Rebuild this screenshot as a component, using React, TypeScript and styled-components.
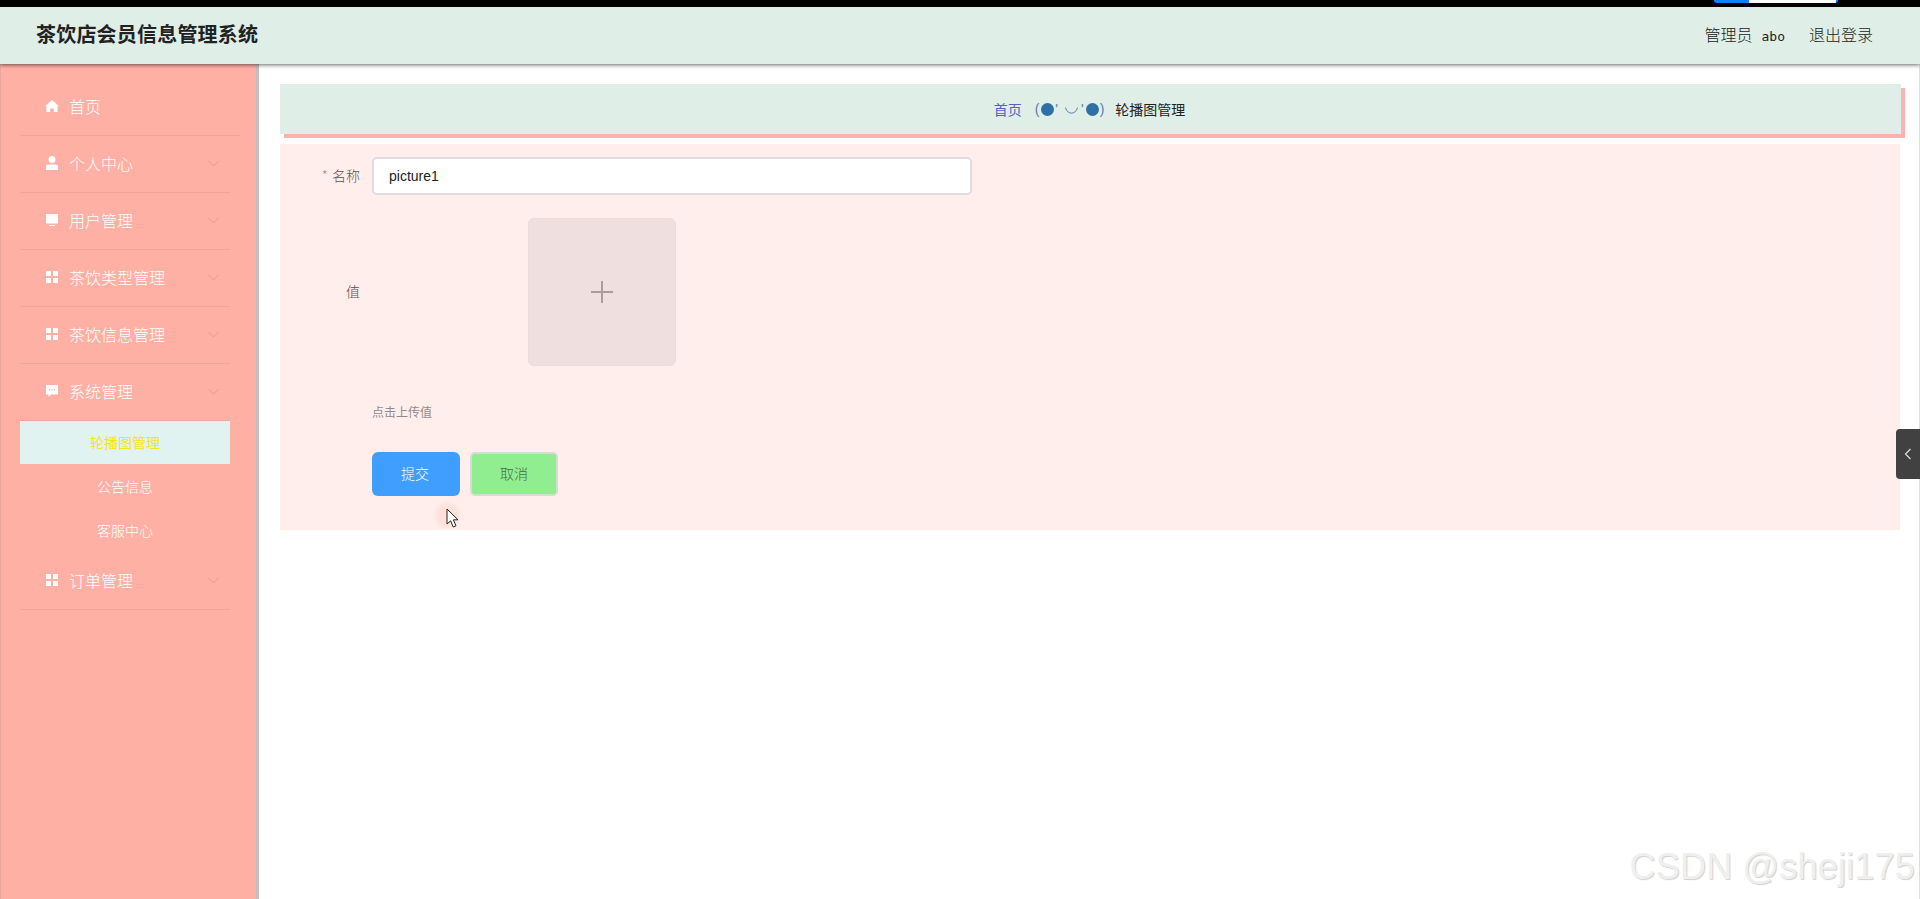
import React from 'react'
import styled, { createGlobalStyle } from 'styled-components'

const GlobalStyle = createGlobalStyle`
  html, body {
    margin: 0;
    padding: 0;
    height: 100%;
    background: #fff;
    overflow: hidden;
    font-family: "Liberation Sans", "Noto Sans CJK SC", sans-serif;
  }
  * { box-sizing: border-box; }
`

const Page = styled.div`
  position: relative;
  width: 1920px;
  height: 899px;
  display: flex;
  flex-direction: column;
  overflow: hidden;
  box-shadow: inset -1px 0 0 #dedede;
`

const TopStrip = styled.div`
  position: relative;
  height: 7px;
  flex: none;
  background: #000;
`

const BrowserPill = styled.div`
  position: absolute;
  left: 1714px;
  top: 0;
  width: 124px;
  height: 3px;
  border-radius: 0 0 6px 6px;
  background: linear-gradient(90deg, #0a84ff 0 28%, #fff 28% 98%, #0a84ff 98%);
`

const Header = styled.header`
  position: relative;
  z-index: 2;
  height: 57px;
  flex: none;
  display: flex;
  align-items: center;
  justify-content: space-between;
  padding: 0 47px 4px 36px;
  background: #dfeee7;
  box-shadow: 0 1px 4px rgba(0, 0, 0, 0.6);
`

const Title = styled.h1`
  margin: 0;
  font-family: "Noto Sans CJK SC", sans-serif;
  font-size: 20px;
  font-weight: 700;
  letter-spacing: 0.2px;
  color: #222;
`

const HeaderRight = styled.div`
  display: flex;
  align-items: center;
  gap: 24px;
  font-family: "Noto Sans CJK SC", sans-serif;
  font-size: 16px;
  font-weight: 300;
  color: #222;
`

const UserName = styled.span`
  margin-left: 9px;
  font-family: "DejaVu Sans Mono", monospace;
  font-size: 13px;
  font-weight: 400;
`

const Body = styled.div`
  flex: 1;
  display: flex;
  min-height: 0;
`

const Sidebar = styled.nav`
  width: 259px;
  flex: none;
  padding: 15px 26px 0 20px;
  background: #ffb0a5;
  border-right: 3px solid #c0c0c4;
  box-shadow: inset 1px 0 0 #e8a79c;
  font-family: "Noto Sans CJK SC", sans-serif;
  font-weight: 300;
`

const MenuItem = styled.div<{ $wide?: boolean }>`
  height: 57px;
  display: flex;
  align-items: center;
  padding: 0 0 2px 25px;
  margin-right: ${p => (p.$wide ? '-10px' : '0')};
  border-bottom: 1px solid #eda59c;
  color: #fff;
  font-size: 16px;
  & > svg:first-child {
    flex: none;
    margin-right: 10px;
  }
`

const SystemItem = styled(MenuItem)`
  height: 56px;
  padding-bottom: 2px;
  border-bottom: none;
`

const LastItem = styled(MenuItem)`
  margin-top: 1px;
`

const MenuLabel = styled.span`
  flex: 1;
`

const Chevron = styled.svg`
  width: 11px;
  height: 7px;
  margin-right: 11px;
  fill: none;
  stroke: #e69b91;
  stroke-width: 1;
`

const SubItem = styled.div<{ $active?: boolean }>`
  height: 44px;
  display: flex;
  align-items: center;
  justify-content: center;
  padding-bottom: 1px;
  font-size: 14px;
  font-weight: ${p => (p.$active ? 400 : 300)};
  color: ${p => (p.$active ? '#f7e21d' : '#fff')};
  background: ${p => (p.$active ? '#e1f3f0' : 'transparent')};
  border-top: ${p => (p.$active ? '1px solid #eda59c' : 'none')};
`

const Content = styled.main`
  flex: 1;
  padding: 20px 20px 0 21px;
  min-width: 0;
`

const Crumb = styled.div`
  height: 50px;
  margin-right: -1px;
  padding-right: 2px;
  display: flex;
  align-items: center;
  justify-content: center;
  background: #dfeee7;
  box-shadow: 4px 4px 0 #ffb3aa;
  font-family: "Noto Sans CJK SC", sans-serif;
  font-size: 14px;
  font-weight: 400;
  color: #222;
`

const CrumbHome = styled.span`
  color: #5560c4;
`

const Face = styled.span`
  display: inline-flex;
  align-items: center;
  margin: 0 11px 0 13px;
  font-family: "Liberation Sans", sans-serif;
  color: #5a7fa8;
`

const FaceDot = styled.span`
  width: 13px;
  height: 13px;
  margin: 0 1px 0 2px;
  border-radius: 50%;
  background: #2f6fa8;
`

const Smile = styled.svg`
  width: 13px;
  height: 7px;
  margin: 3px 3px 0 7px;
  fill: none;
  stroke: #5a7fa8;
  stroke-width: 1;
`

const Form = styled.section`
  height: 386px;
  margin-top: 10px;
  padding-top: 13px;
  background: #ffeeeb;
  font-family: "Noto Sans CJK SC", sans-serif;
  font-weight: 300;
`

const Row = styled.div<{ $height: number; $gap: number }>`
  height: ${p => p.$height}px;
  margin-bottom: ${p => p.$gap}px;
  display: flex;
  align-items: center;
`

const Label = styled.label`
  width: 80px;
  flex: none;
  margin: -2px 12px 0 0;
  text-align: right;
  font-size: 14px;
  color: #5f5050;
`

const Star = styled.span`
  margin-right: 4px;
  color: #e8737a;
`

const Input = styled.input`
  width: 600px;
  height: 38px;
  padding: 0 15px;
  border: 2px solid #e2dbe6;
  border-radius: 5px;
  outline: none;
  background: #fff;
  font-family: "Liberation Sans", sans-serif;
  font-size: 14px;
  color: #222;
`

const Upload = styled.div`
  width: 148px;
  height: 148px;
  margin-left: 156px;
  display: flex;
  align-items: center;
  justify-content: center;
  border: 1px solid #e8dcdc;
  border-radius: 6px;
  background: #efdfdf;
`

const Hint = styled.div`
  height: 16px;
  margin: 38px 0 0 92px;
  font-size: 12px;
  font-weight: 400;
  line-height: 16px;
  color: #948a8a;
`

const Buttons = styled.div`
  display: flex;
  gap: 10px;
  margin: 32px 0 0 92px;
`

const SubmitButton = styled.button`
  width: 88px;
  height: 44px;
  padding: 0 2px 2px 0;
  border: none;
  border-radius: 6px;
  background: #409eff;
  color: #fff;
  font: inherit;
  font-size: 14px;
`

const CancelButton = styled.button`
  width: 88px;
  height: 44px;
  padding: 0 0 2px;
  border: 2px solid #d5dcd2;
  border-radius: 5px;
  background: #90ee90;
  color: #4b6b4b;
  font: inherit;
  font-size: 14px;
`

const Handle = styled.div`
  position: absolute;
  right: 0;
  top: 429px;
  width: 24px;
  height: 50px;
  display: flex;
  align-items: center;
  justify-content: center;
  border-radius: 4px 0 0 4px;
  background: #414141;
`

const CursorHalo = styled.div`
  position: absolute;
  left: 432px;
  top: 500px;
  width: 30px;
  height: 30px;
  border-radius: 50%;
  background: radial-gradient(circle, rgba(255, 205, 190, 0.4) 0 40%, rgba(255, 205, 190, 0) 72%);
`

const Cursor = styled.svg`
  position: absolute;
  left: 446px;
  top: 508px;
  width: 14px;
  height: 21px;
`

const Watermark = styled.div`
  position: absolute;
  right: 5px;
  bottom: 11px;
  font-family: "Liberation Sans", sans-serif;
  font-size: 36px;
  line-height: 42px;
  letter-spacing: 0.2px;
  color: #efefef;
  text-shadow: 1px 1px 1px #cfcfcf;
`

const Home = () => (
  <svg width="14" height="14" viewBox="0 0 14 14" fill="#fff">
    <path d="M7 1 14 7.2 12.6 7.2V13H8.8V9.4H5.2V13H1.4V7.2H0z" />
  </svg>
)
const User = () => (
  <svg width="14" height="14" viewBox="0 0 14 14" fill="#fff">
    <circle cx="7" cy="3.6" r="3.5" />
    <path d="M1 14V10.6C1 9.2 2 8.4 3.4 8.4H10.6C12 8.4 13 9.2 13 10.6V14z" />
  </svg>
)
const Screen = () => (
  <svg width="14" height="14" viewBox="0 0 14 14" fill="#fff">
    <path d="M1 1H13V10.5H1zM4 12H10V13H4z" />
  </svg>
)
const Grid = () => (
  <svg width="14" height="14" viewBox="0 0 14 14" fill="#fff">
    <path d="M1 1H6V6H1zM8 1H13V6H8zM1 8H6V13H1zM8 8H13V13H8z" />
  </svg>
)
const Comment = () => (
  <svg width="14" height="14" viewBox="0 0 14 14" fill="#fff">
    <path fillRule="evenodd" d="M1 1H13V10.5H6L3.5 13V10.5H1zM4 5V6.2H5.2V5zM6.4 5V6.2H7.6V5zM8.8 5V6.2H10V5z" />
  </svg>
)
const Down = () => (
  <Chevron viewBox="0 0 11 7">
    <path d="M.5 1 5.5 6 10.5 1" />
  </Chevron>
)

export default function App() {
  return (
    <Page>
      <GlobalStyle />
      <TopStrip>
        <BrowserPill />
      </TopStrip>
      <Header>
        <Title>茶饮店会员信息管理系统</Title>
        <HeaderRight>
          <span>
            管理员<UserName>abo</UserName>
          </span>
          <span>退出登录</span>
        </HeaderRight>
      </Header>
      <Body>
        <Sidebar>
          <MenuItem $wide>
            <Home />
            <MenuLabel>首页</MenuLabel>
          </MenuItem>
          <MenuItem>
            <User />
            <MenuLabel>个人中心</MenuLabel>
            <Down />
          </MenuItem>
          <MenuItem>
            <Screen />
            <MenuLabel>用户管理</MenuLabel>
            <Down />
          </MenuItem>
          <MenuItem>
            <Grid />
            <MenuLabel>茶饮类型管理</MenuLabel>
            <Down />
          </MenuItem>
          <MenuItem>
            <Grid />
            <MenuLabel>茶饮信息管理</MenuLabel>
            <Down />
          </MenuItem>
          <SystemItem>
            <Comment />
            <MenuLabel>系统管理</MenuLabel>
            <Down />
          </SystemItem>
          <SubItem $active>轮播图管理</SubItem>
          <SubItem>公告信息</SubItem>
          <SubItem>客服中心</SubItem>
          <LastItem>
            <Grid />
            <MenuLabel>订单管理</MenuLabel>
            <Down />
          </LastItem>
        </Sidebar>
        <Content>
          <Crumb>
            <CrumbHome>首页</CrumbHome>
            <Face>
              (<FaceDot />'
              <Smile viewBox="0 0 13 7">
                <path d="M.5 .5C2 8 11 8 12.5 .5" />
              </Smile>
              '<FaceDot />)
            </Face>
            <span>轮播图管理</span>
          </Crumb>
          <Form>
            <Row $height={38} $gap={23}>
              <Label>
                <Star>*</Star>名称
              </Label>
              <Input defaultValue="picture1" />
            </Row>
            <Row $height={148} $gap={0}>
              <Label>值</Label>
              <Upload>
                <svg width="24" height="24" viewBox="0 0 24 24" stroke="#a89c9c" strokeWidth="2">
                  <path d="M12 1V23M1 12H23" />
                </svg>
              </Upload>
            </Row>
            <Hint>点击上传值</Hint>
            <Buttons>
              <SubmitButton>提交</SubmitButton>
              <CancelButton>取消</CancelButton>
            </Buttons>
          </Form>
        </Content>
      </Body>
      <Handle>
        <svg width="8" height="12" viewBox="0 0 8 12" fill="none" stroke="#ddd" strokeWidth="1.2">
          <path d="M6.5 1 1.5 6 6.5 11" />
        </svg>
      </Handle>
      <CursorHalo />
      <Cursor viewBox="0 0 14 21">
        <path d="M1 1V16L4.6 12.8 7.2 19 10 17.8 7.4 11.8H12z" fill="#fff" stroke="#222" strokeWidth="1" />
      </Cursor>
      <Watermark>CSDN @sheji175</Watermark>
    </Page>
  )
}
